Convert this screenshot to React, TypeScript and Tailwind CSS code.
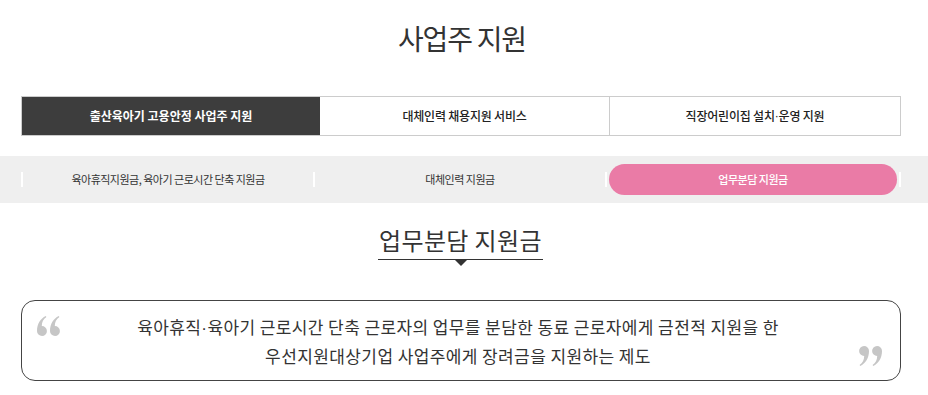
import React from 'react';

const font = { fontFamily: '"Noto Sans CJK KR", "Noto Sans", sans-serif' };
const dotFont = { fontFamily: '"Liberation Sans", sans-serif' };

const Dot = () => <span style={dotFont}>·</span>;

// 닫는 따옴표 모양 (여는 쪽은 180도 회전)
const comma = 'M5 0 A5 5 0 0 1 10 5 C10 12 6.5 17.5 1.2 20 L0.6 18.9 C3.6 17 5.2 13.8 5.2 10 A5 5 0 0 1 5 0 Z';

function QuoteMark({ open, className }: { open?: boolean; className?: string }) {
    return (
        <svg width="23" height="20" viewBox="0 0 23 20" className={className} fill="#c6c6c6">
            <g transform={open ? 'rotate(180 11.5 10)' : undefined}>
                <path d={comma} />
                <path d={comma} transform="translate(13 0)" />
            </g>
        </svg>
    );
}

const mainTabs = [
    <>출산육아기 고용안정 사업주 지원</>,
    <>대체인력 채용지원 서비스</>,
    <>직장어린이집 설치<Dot />운영 지원</>,
];
const subTabs = ['육아휴직지원금, 육아기 근로시간 단축 지원금', '대체인력 지원금', '업무분담 지원금'];

export default function App() {
    return (
        <div className="w-[928px] h-[395px] bg-white text-[#333] overflow-hidden" style={font}>
            {/* 페이지 타이틀 */}
            <h1 className="pt-[18px] pr-[4px] text-center text-[28px] leading-[40px] font-normal text-[#333] tracking-[-1.2px]">
                사업주 지원
            </h1>

            {/* 상위 탭 */}
            <div className="mt-[38px] mx-[21px] w-[880px] h-[40px] flex border border-[#ccc]">
                {mainTabs.map((t, i) => (
                    <div
                        key={i}
                        className={
                            i === 0
                                ? 'w-[298px] flex items-center justify-center bg-[#3d3d3d] text-white text-[12px] font-bold tracking-[0px]'
                                : i === 1
                                ? 'w-[290px] flex items-center justify-center border-r border-[#ccc] text-[#222] text-[12px] font-medium tracking-[-0.2px]'
                                : 'flex-1 flex items-center justify-center text-[#222] text-[12px] font-medium tracking-[-0.2px]'
                        }
                    >
                        {t}
                    </div>
                ))}
            </div>

            {/* 하위 탭 */}
            <div className="mt-[20px] h-[47px] bg-[#efefef] flex items-center pl-[21px]">
                {subTabs.map((t, i) => (
                    <React.Fragment key={t}>
                        <span className="w-[2px] h-[15px] bg-white" />
                        {i === 2 ? (
                            <div className="ml-[2px] w-[288px] h-[31px] rounded-full bg-[#ea7ba6] text-white flex items-center justify-center text-[11px] font-medium tracking-[-0.5px]">
                                {t}
                            </div>
                        ) : (
                            <div className="w-[290px] flex items-center justify-center text-[11px] text-[#333] tracking-[-0.5px]">
                                {t}
                            </div>
                        )}
                    </React.Fragment>
                ))}
                <span className="ml-[2px] w-[2px] h-[15px] bg-white" />
            </div>

            {/* 섹션 제목 */}
            <div className="mt-[20px] pr-[7px] flex flex-col items-center">
                <h2 className="w-[165px] text-center text-[24px] leading-[33px] text-[#333] font-normal tracking-[0.4px] border-b border-[#333] pb-[3px]">
                    업무분담 지원금
                </h2>
                <div className="w-0 h-0 border-l-[6px] border-r-[6px] border-t-[6px] border-l-transparent border-r-transparent border-t-[#333]" />
            </div>

            {/* 설명 박스 */}
            <div className="mt-[34px] mx-[21px] w-[880px] h-[81px] border border-[#444] rounded-[14px] relative flex flex-col items-center justify-center pr-[6px] text-[17px] leading-[27px] text-[#333] tracking-[0.4px]">
                <QuoteMark open className="absolute left-[15px] top-[15px]" />
                <p>육아휴직<Dot />육아기 근로시간 단축 근로자의 업무를 분담한 동료 근로자에게 금전적 지원을 한</p>
                <p>우선지원대상기업 사업주에게 장려금을 지원하는 제도</p>
                <QuoteMark className="absolute right-[18px] top-[45px]" />
            </div>
        </div>
    );
}
